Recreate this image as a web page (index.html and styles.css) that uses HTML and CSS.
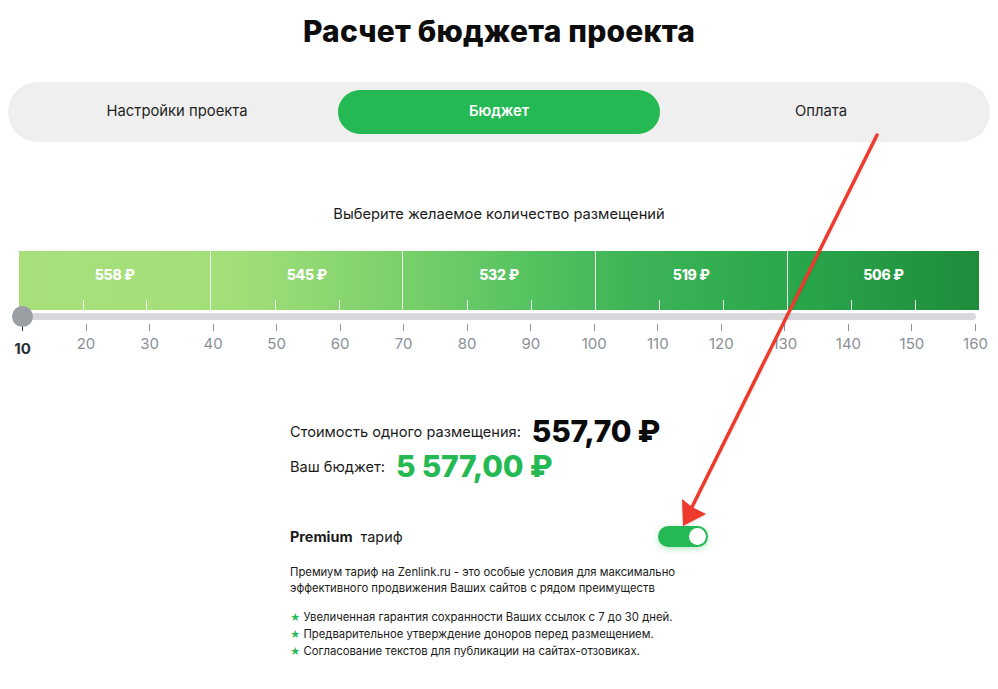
FILE: index.html
```html
<!DOCTYPE html>
<html lang="ru">
<head>
<meta charset="utf-8">
<title>Расчет бюджета проекта</title>
<link rel="stylesheet" href="styles.css">
</head>
<body>
<main class="page">
  <h1 class="title">Расчет бюджета проекта</h1>

  <nav class="tabs">
    <div class="tab">Настройки проекта</div>
    <div class="tab tab-active">Бюджет</div>
    <div class="tab">Оплата</div>
  </nav>

  <section class="slider">
    <p class="hint">Выберите желаемое количество размещений</p>
    <div class="bar">
      <div class="seg"><span class="price">558 ₽</span><i class="tick t1"></i><i class="tick t2"></i></div>
      <div class="seg"><span class="price">545 ₽</span><i class="tick t1"></i><i class="tick t2"></i></div>
      <div class="seg"><span class="price">532 ₽</span><i class="tick t1"></i><i class="tick t2"></i></div>
      <div class="seg"><span class="price">519 ₽</span><i class="tick t1"></i><i class="tick t2"></i></div>
      <div class="seg"><span class="price">506 ₽</span><i class="tick t1"></i><i class="tick t2"></i></div>
    </div>
    <div class="track"><span class="thumb"></span></div>
    <div class="scale">
      <div class="mark mark-current"><i></i><span>10</span></div>
      <div class="mark"><i></i><span>20</span></div>
      <div class="mark"><i></i><span>30</span></div>
      <div class="mark"><i></i><span>40</span></div>
      <div class="mark"><i></i><span>50</span></div>
      <div class="mark"><i></i><span>60</span></div>
      <div class="mark"><i></i><span>70</span></div>
      <div class="mark"><i></i><span>80</span></div>
      <div class="mark"><i></i><span>90</span></div>
      <div class="mark"><i></i><span>100</span></div>
      <div class="mark"><i></i><span>110</span></div>
      <div class="mark"><i></i><span>120</span></div>
      <div class="mark"><i></i><span>130</span></div>
      <div class="mark"><i></i><span>140</span></div>
      <div class="mark"><i></i><span>150</span></div>
      <div class="mark"><i></i><span>160</span></div>
    </div>
  </section>

  <section class="summary">
    <div class="row"><span class="label">Стоимость одного размещения:</span><span class="amount">557,70 ₽</span></div>
    <div class="row"><span class="label">Ваш бюджет:</span><span class="amount amount-green">5 577,00 ₽</span></div>

    <div class="premium">
      <div class="premium-name"><b>Premium</b> тариф</div>
      <span class="toggle"><span class="knob"></span></span>
    </div>
    <p class="desc">Премиум тариф на Zenlink.ru - это особые условия для максимально эффективного продвижения Ваших сайтов с рядом преимуществ</p>
    <ul class="perks">
      <li><span class="star">★</span>Увеличенная гарантия сохранности Ваших ссылок с 7 до 30 дней.</li>
      <li><span class="star">★</span>Предварительное утверждение доноров перед размещением.</li>
      <li><span class="star">★</span>Согласование текстов для публикации на сайтах-отзовиках.</li>
    </ul>
  </section>

  <svg class="arrow" width="998" height="689" viewBox="0 0 998 689">
    <line x1="877" y1="135" x2="692" y2="507" stroke="#ee3a2c" stroke-width="3.4" stroke-linecap="round"/>
    <polygon points="683,526 682,499 692,507 706,514" fill="#ee3a2c"/>
  </svg>
</main>
</body>
</html>
```

FILE: styles.css
```css
* { box-sizing: border-box; }
html, body { margin: 0; padding: 0; background: #fff; }
body {
  font-family: Inter, "Noto Sans", Arial, sans-serif;
  color: #1b1b1b;
}
.page { position: relative; width: 998px; height: 689px; overflow: hidden; }

.title {
  margin: 14px 0 0;
  text-align: center;
  font-size: 30px;
  line-height: 34px;
  font-weight: 800;
  color: #0d0d0d;
  letter-spacing: 0.2px;
}

.tabs {
  display: flex;
  margin: 34px 8px 0;
  height: 60px;
  padding: 8px;
  background: #efefef;
  border-radius: 30px;
}
.tab {
  flex: 1;
  display: flex;
  align-items: center;
  justify-content: center;
  padding-bottom: 3px;
  font-size: 14.8px;
  color: #1f1f1f;
  border-radius: 22px;
}
.tab-active {
  background: #25b953;
  color: #fff;
  font-weight: 600;
}

.hint {
  margin: 62px 0 0;
  text-align: center;
  font-size: 14.7px;
  line-height: 20px;
  color: #1b1b1b;
}

.bar {
  display: flex;
  margin: 27px 19px 0;
  height: 59px;
  background: linear-gradient(90deg, #a7e07b 0%, #a3df79 22%, #7fd26c 38%, #5dc663 50%, #3db457 64%, #2aa84b 80%, #1f8c3b 100%);
}
.seg {
  position: relative;
  flex: 1;
  display: flex;
  justify-content: center;
  padding-top: 15px;
  border-left: 1px solid rgba(255,255,255,0.9);
}
.seg:first-child { border-left: none; }
.price {
  font-size: 14px;
  line-height: 18px;
  font-weight: 800;
  color: #fff;
  letter-spacing: -0.3px;
}
.tick {
  position: absolute;
  bottom: 0;
  width: 1px;
  height: 10px;
  background: rgba(255,255,255,0.9);
}
.t1 { left: 33.3%; }
.t2 { left: 66.6%; }

.track {
  position: relative;
  margin: 3px 22px 0 19px;
  height: 7px;
  border-radius: 4px;
  background: #d6d8db;
}
.thumb {
  position: absolute;
  left: -7px;
  top: -7px;
  width: 21px;
  height: 21px;
  border-radius: 50%;
  background: #9b9ea2;
}

.scale {
  display: flex;
  justify-content: space-between;
  margin: 4px 22px 0 22px;
}
.mark {
  width: 1px;
  display: flex;
  flex-direction: column;
  align-items: center;
}
.mark i {
  display: block;
  width: 1px;
  height: 7px;
  background: #8d949b;
}
.mark span {
  margin-top: 4px;
  font-size: 15px;
  line-height: 18px;
  color: #8a9098;
  white-space: nowrap;
}
.mark-current i { background: #2b2f33; }
.mark-current span {
  margin-top: 9px;
  font-weight: 700;
  color: #2a2e33;
}

.summary {
  width: 418px;
  margin: 56px auto 0;
}
.row {
  display: flex;
  align-items: center;
  gap: 11px;
  height: 35px;
}
.label { font-size: 14.6px; line-height: 20px; color: #1b1b1b; }
.amount {
  font-size: 30px;
  line-height: 35px;
  font-weight: 800;
  color: #0b0b0b;
  letter-spacing: -0.2px;
}
.amount-green { color: #25b953; }

.premium {
  display: flex;
  justify-content: space-between;
  align-items: center;
  margin-top: 41px;
  height: 22px;
}
.premium-name { font-size: 14.4px; color: #1b1b1b; }
.premium-name b { font-weight: 700; margin-right: 4px; }
.toggle {
  position: relative;
  width: 50px;
  height: 21px;
  border-radius: 11px;
  background: #25b953;
  box-shadow: 0 2px 6px rgba(37,185,83,0.35);
  display: flex;
  justify-content: flex-end;
  align-items: center;
  padding: 0 2px;
}
.knob {
  width: 17px;
  height: 17px;
  border-radius: 50%;
  background: #fff;
}

.desc {
  margin: 17px 0 0;
  font-size: 11.3px;
  line-height: 16px;
  color: #1b1b1b;
  width: 410px;
}
.perks {
  list-style: none;
  margin: 13px 0 0;
  padding: 0;
  font-size: 11.3px;
  line-height: 17px;
  color: #1b1b1b;
}
.star { color: #25b953; margin-right: 3px; font-size: 10px; }

.arrow {
  position: absolute;
  left: 0;
  top: 0;
  pointer-events: none;
  filter: drop-shadow(0 1px 1px rgba(0,0,0,0.15));
}
```
